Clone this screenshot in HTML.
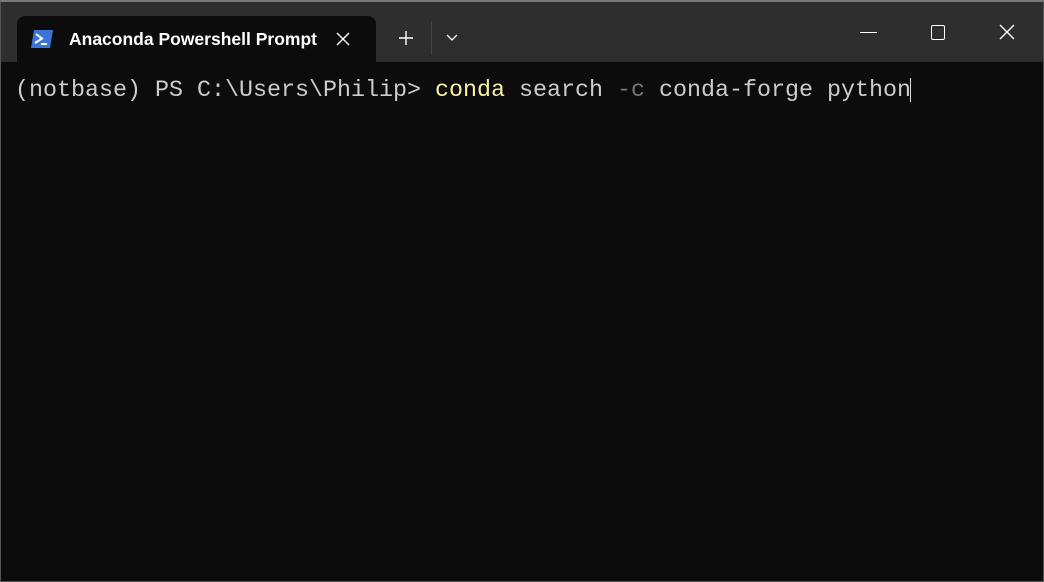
<!DOCTYPE html>
<html><head><style>
html,body{margin:0;padding:0;}
body{width:1044px;height:582px;background:#0c0c0c;position:relative;overflow:hidden;font-family:"Liberation Sans",sans-serif;}
.border{position:absolute;inset:0;border:1px solid #555;border-top:2px solid #7a7a7a;box-sizing:border-box;pointer-events:none;}
.title{position:absolute;left:0;top:0;width:1044px;height:62px;background:#2e2e2e;}
.tab{position:absolute;left:17px;top:16px;width:359px;height:46px;background:#0c0c0c;border-radius:8px 8px 0 0;}
.tabtext{position:absolute;left:69px;top:29px;color:#fff;font-size:17.5px;font-weight:bold;}
.term{position:absolute;left:15px;top:76px;font-family:"Liberation Mono",monospace;font-size:23.33px;color:#cccccc;white-space:pre;line-height:30px;}
.y{color:#f9f1a5}.g{color:#767676}
.cursor{position:absolute;left:910px;top:78px;width:1px;height:24px;background:#ddd;}
</style></head><body>
<div class="title"></div>
<div class="tab"></div>
<svg style="position:absolute;left:30px;top:29px" width="24" height="20" viewBox="0 0 24 20">
<path d="M4 1 H23 L20 19 H1 Z" fill="#3c74d6"/>
<path d="M6 5 L12 9.5 L5 14" stroke="#fff" stroke-width="2" fill="none"/>
<path d="M11 15 H17" stroke="#fff" stroke-width="2"/>
</svg>
<div class="tabtext">Anaconda Powershell Prompt</div>
<svg style="position:absolute;left:336px;top:32px" width="14" height="14"><path d="M1 1L13 13M13 1L1 13" stroke="#fff" stroke-width="1.4"/></svg>
<svg style="position:absolute;left:398px;top:30px" width="16" height="16"><path d="M8 1V15M1 8H15" stroke="#fff" stroke-width="1.4"/></svg>
<div style="position:absolute;left:431px;top:21px;width:1px;height:34px;background:#444"></div>
<svg style="position:absolute;left:446px;top:34px" width="12" height="8"><path d="M1 1L6 6L11 1" stroke="#fff" stroke-width="1.3" fill="none"/></svg>
<div style="position:absolute;left:860px;top:32px;width:17px;height:1.3px;background:#fff"></div>
<div style="position:absolute;left:931px;top:25px;width:12px;height:13px;border:1.3px solid #fff;border-radius:2px"></div>
<svg style="position:absolute;left:999px;top:24px" width="16" height="16"><path d="M1 1L15 15M15 1L1 15" stroke="#fff" stroke-width="1.4"/></svg>
<div class="term">(notbase) PS C:\Users\Philip&gt; <span class="y">conda</span> search <span class="g">-c</span> conda-forge python</div>
<div class="cursor"></div>
<div class="border"></div>
</body></html>
